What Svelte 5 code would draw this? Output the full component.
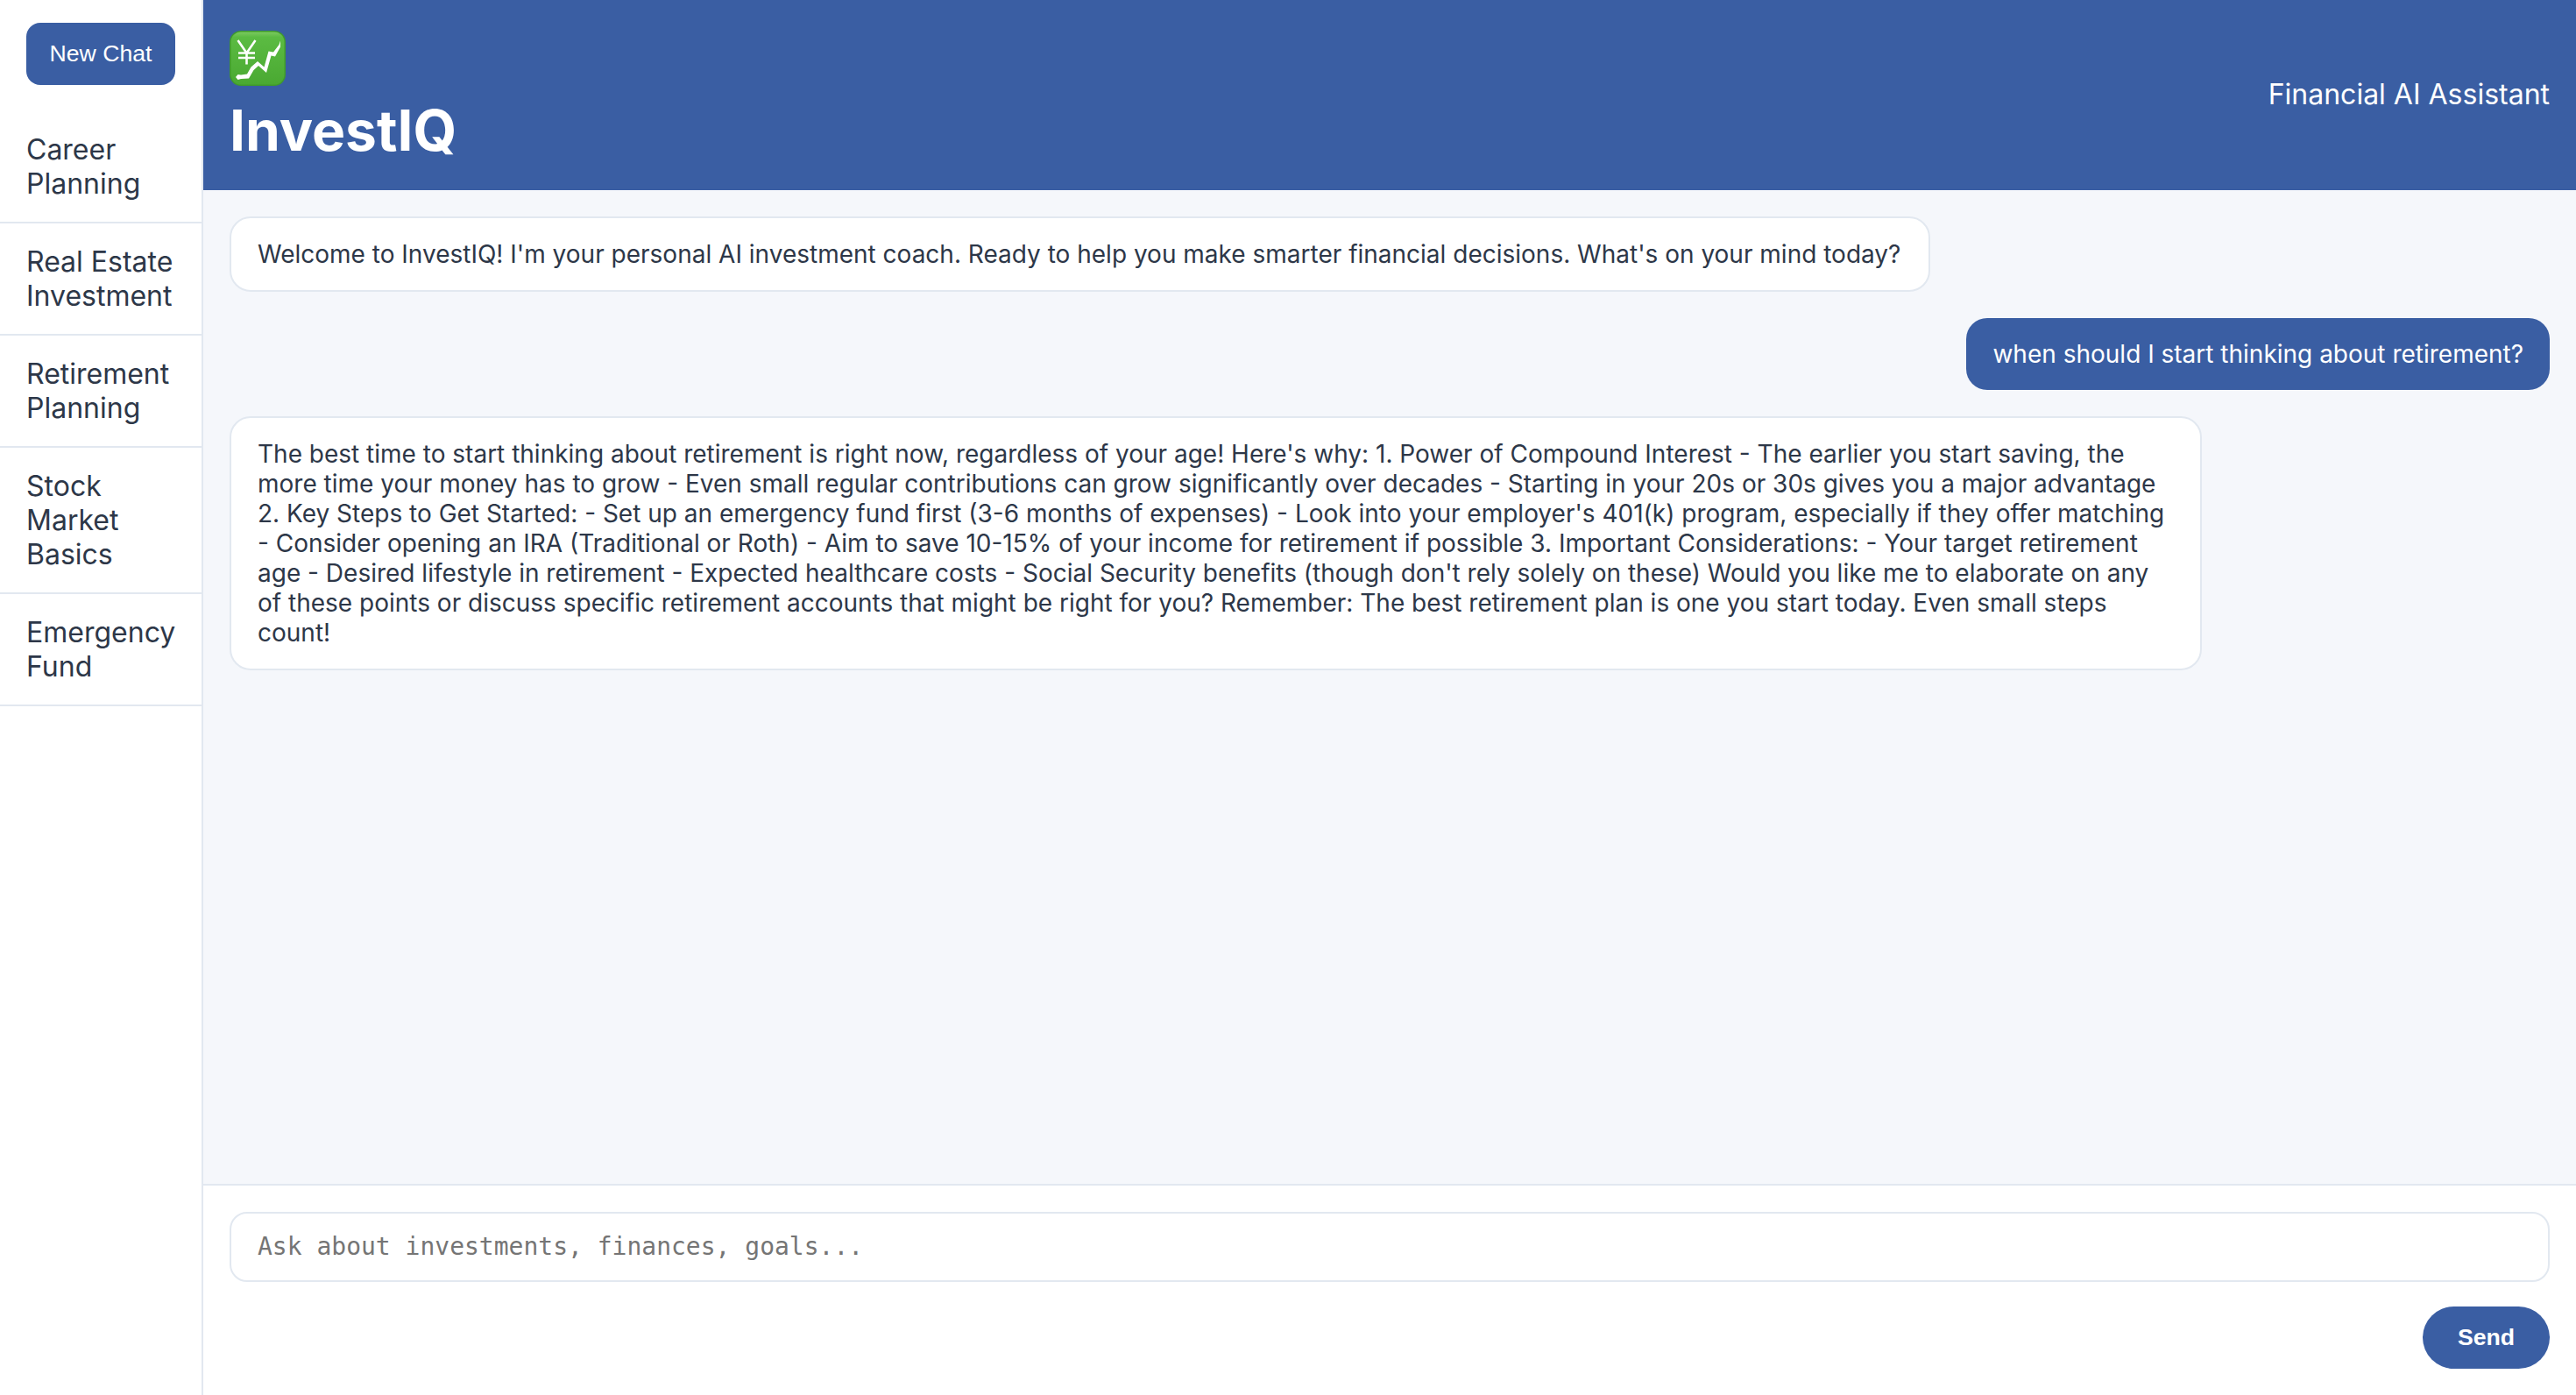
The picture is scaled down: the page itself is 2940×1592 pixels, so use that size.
<script>
  const topics = ['Career Planning', 'Real Estate Investment', 'Retirement Planning', 'Stock Market Basics', 'Emergency Fund'];
  const reply = "The best time to start thinking about retirement is right now, regardless of your age! Here's why: 1. Power of Compound Interest - The earlier you start saving, the more time your money has to grow - Even small regular contributions can grow significantly over decades - Starting in your 20s or 30s gives you a major advantage 2. Key Steps to Get Started: - Set up an emergency fund first (3-6 months of expenses) - Look into your employer's 401(k) program, especially if they offer matching - Consider opening an IRA (Traditional or Roth) - Aim to save 10-15% of your income for retirement if possible 3. Important Considerations: - Your target retirement age - Desired lifestyle in retirement - Expected healthcare costs - Social Security benefits (though don't rely solely on these) Would you like me to elaborate on any of these points or discuss specific retirement accounts that might be right for you? Remember: The best retirement plan is one you start today. Even small steps count!";
</script>

<div class="app">
  <aside class="sidebar">
    <div class="new-wrap"><button class="new-chat">New Chat</button></div>
    {#each topics as t}
      <div class="topic">{t}</div>
    {/each}
  </aside>
  <main class="main">
    <header class="header">
      <div class="brand">
        <svg class="emoji" viewBox="0 0 64 63" aria-hidden="true">
          <defs>
            <linearGradient id="g" x1="0" y1="0" x2="0" y2="1">
              <stop offset="0" stop-color="#7ac95f" />
              <stop offset="0.1" stop-color="#5bbb42" />
              <stop offset="1" stop-color="#4aa932" />
            </linearGradient>
          </defs>
          <rect x="0" y="0" width="64" height="63" rx="13" fill="#3f9a2c" />
          <rect x="1.5" y="1.5" width="61" height="60" rx="11.5" fill="url(#g)" />
          <path d="M9.5 11 L19.5 25.5 L29.5 11 M19.5 25.5 V38.5 M10 25.5 H29 M10 31 H29" fill="none" stroke="#fff" stroke-width="2.6" />
          <path d="M7 53 L9.5 50 L13 50.5 L20 49.5 L24.5 41.5 L32 35 L39.5 41.5 L44.5 23.5 L50 24.5 L56.5 16 L58 11.5 L58 18.5 L52 29.5 L47.5 28.5 L42 48 L33 40 L27.5 45 L22 54.5 L13 55 L9.5 56 Z" fill="#fff" />
        </svg>
        <h1>InvestIQ</h1>
      </div>
      <div class="tagline">Financial AI Assistant</div>
    </header>

    <section class="messages">
      <div class="msg bot">Welcome to InvestIQ! I'm your personal AI investment coach. Ready to help you make smarter financial decisions. What's on your mind today?</div>
      <div class="msg user">when should I start thinking about retirement?</div>
      <div class="msg bot">{reply}</div>
    </section>

    <footer class="composer">
      <input class="ask" placeholder="Ask about investments, finances, goals..." />
      <button class="send">Send</button>
    </footer>
  </main>
</div>

<style>
  :global(body) {
    margin: 0;
    font-family: Inter, "Liberation Sans", sans-serif;
    color: #2d3748;
  }
  .app {
    display: flex;
    height: 1592px;
    width: 2940px;
    overflow: hidden;
  }
  .sidebar {
    width: 232px;
    flex: none;
    box-sizing: border-box;
    background: #fff;
    border-right: 2px solid #e2e8f0;
  }
  .new-wrap {
    padding: 26px 30px 30px;
  }
  .new-chat {
    display: block;
    width: 100%;
    height: 71px;
    border: 0;
    padding: 0;
    border-radius: 16px;
    background: #3a5ea3;
    color: #fff;
    font: 26.67px "Liberation Sans", Arial, sans-serif;
  }
  .topic {
    padding: 24px 30px;
    font-size: 32px;
    line-height: 39px;
    border-bottom: 2px solid #e2e8f0;
    color: #2d3748;
  }
  .main {
    flex: 1;
    min-width: 0;
    display: flex;
    flex-direction: column;
    background: #f5f7fb;
  }
  .header {
    flex: none;
    height: 217px;
    box-sizing: border-box;
    padding: 0 30px;
    display: flex;
    align-items: center;
    justify-content: space-between;
    background: #3a5ea3;
    color: #fff;
  }
  .brand {
    align-self: flex-start;
    display: flex;
    flex-direction: column;
    align-items: flex-start;
    padding-top: 35px;
  }
  .emoji {
    width: 64px;
    height: 63px;
    display: block;
  }
  h1 {
    margin: 12px 0 0;
    font-size: 64px;
    line-height: 77px;
    font-weight: 700;
  }
  .tagline {
    font-size: 32px;
    line-height: 39px;
    padding-bottom: 3px;
  }
  .messages {
    flex: 1;
    min-height: 0;
    padding: 30px 30px 0;
    display: flex;
    flex-direction: column;
    gap: 30px;
    align-items: flex-start;
  }
  .msg {
    box-sizing: border-box;
    max-width: 85%;
    padding: 24px 30px;
    font-size: 28px;
    line-height: 34px;
    border-radius: 24px;
  }
  .bot {
    padding-right: 32px;
    background: #fff;
    border: 2px solid #e2e8f0;
  }
  .user {
    align-self: flex-end;
    background: #3a5ea3;
    color: #fff;
  }
  .composer {
    flex: none;
    box-sizing: border-box;
    height: 241px;
    padding: 30px;
    background: #fff;
    border-top: 2px solid #e2e8f0;
    display: flex;
    flex-direction: column;
    align-items: flex-end;
    gap: 28px;
  }
  .ask {
    width: 100%;
    height: 80px;
    box-sizing: border-box;
    padding: 0 30px 2px;
    border: 2px solid #e2e8f0;
    border-radius: 20px;
    background: #fff;
    font: 28px "DejaVu Sans Mono", monospace;
    outline: none;
  }
  .ask::placeholder {
    color: #757575;
    opacity: 1;
  }
  .send {
    width: 145px;
    height: 71px;
    border: 0;
    padding: 0;
    border-radius: 36px;
    background: #3a5ea3;
    color: #fff;
    font: 700 26.67px "Liberation Sans", Arial, sans-serif;
  }
</style>
